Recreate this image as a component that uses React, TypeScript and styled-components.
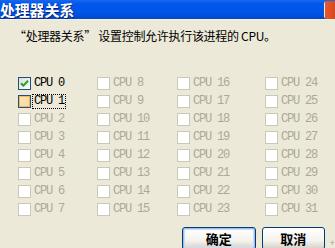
import styled, { createGlobalStyle, css } from "styled-components";

const GlobalStyle = createGlobalStyle`
  body {
    margin: 0;
    background: #ece9d8;
    overflow: hidden;
  }
`;

type BoxState = "checked" | "hover" | "off" | "disabled";

const cpus = Array.from({ length: 32 }, (_, i) => i);

function stateOf(n: number): BoxState {
  if (n === 0) return "checked";
  if (n === 1) return "hover";
  return "disabled";
}

export default function App() {
  return (
    <>
      <GlobalStyle />
      <Window>
        <TitleBar>
          <Title>处理器关系</Title>
          <CloseBox />
        </TitleBar>
        <Body>
          <Desc>“处理器关系” 设置控制允许执行该进程的 CPU。</Desc>
          <CpuGrid>
            {cpus.map((n) => {
              const st = stateOf(n);
              return (
                <CpuItem key={n}>
                  <Box $state={st}>
                    {st === "checked" && (
                      <svg width="9" height="9" viewBox="0 0 9 9">
                        <path
                          d="M1 4.2 L3.4 6.6 L8 1.8"
                          fill="none"
                          stroke="#21a121"
                          strokeWidth="2"
                        />
                      </svg>
                    )}
                  </Box>
                  <Label $disabled={st === "disabled"} $focused={n === 1}>
                    CPU {n}
                  </Label>
                </CpuItem>
              );
            })}
          </CpuGrid>
          <ButtonRow>
            <Button $primary $w={75}>确定</Button>
            <Button $w={64}>取消</Button>
            <Grip>+</Grip>
          </ButtonRow>
        </Body>
      </Window>
    </>
  );
}

const Window = styled.div`
  width: 335px;
  height: 248px;
  display: flex;
  flex-direction: column;
  background: #ece9d8;
`;

const TitleBar = styled.div`
  height: 20px;
  display: flex;
  align-items: flex-start;
  justify-content: space-between;
  background: linear-gradient(#1a68ea 0%, #0058ee 20%, #0054e3 70%, #0148c8 100%);
  border-bottom: 1px solid #f4f2ea;
`;

const Title = styled.div`
  font-family: "Noto Sans CJK SC", sans-serif;
  font-size: 15px;
  font-weight: 700;
  line-height: 19px;
  color: #fff;
  text-shadow: 1px 1px #0a1e6e;
  letter-spacing: -0.2px;
`;

const CloseBox = styled.div`
  width: 11px;
  height: 18px;
  margin-top: 1px;
  background: linear-gradient(90deg, #f4e4dc 0, #f4e4dc 1px, #e35b2e 1px, #d8481e 100%);
  border-radius: 3px 0 0 3px;
`;

const Body = styled.div`
  flex: 1;
  display: flex;
  flex-direction: column;
`;

const Desc = styled.div`
  margin: 8px 0 0 14px;
  font-family: "Noto Sans CJK SC", sans-serif;
  font-size: 12px;
  line-height: 16px;
  letter-spacing: -0.3px;
  color: #000;
  white-space: nowrap;
`;

const CpuGrid = styled.div`
  margin: 30px 0 0 18px;
  display: grid;
  grid-template-columns: 79px 80px 88px 70px;
  grid-template-rows: repeat(8, 18px);
  grid-auto-flow: column;
`;

const CpuItem = styled.div`
  display: flex;
  align-items: center;
  gap: 2px;
`;

const Box = styled.div<{ $state: BoxState }>`
  width: 13px;
  height: 13px;
  box-sizing: border-box;
  display: flex;
  align-items: center;
  justify-content: center;
  ${(p) =>
    p.$state === "disabled"
      ? css`
          border: 1px solid #cac8bb;
          background: #fff;
        `
      : p.$state === "hover"
      ? css`
          border: 1px solid #1c5180;
          background: linear-gradient(135deg, #fbe8c4, #f6d59a);
          box-shadow: inset 0 0 0 1px #f8b84e;
        `
      : css`
          border: 1px solid #1c5180;
          background: linear-gradient(135deg, #dcdcd7, #fff);
        `}
`;

const Label = styled.span<{ $disabled?: boolean; $focused?: boolean }>`
  font-family: "Liberation Mono", monospace;
  font-size: 12px;
  letter-spacing: -1.2px;
  line-height: 13px;
  padding: 0 1px;
  color: ${(p) => (p.$disabled ? "#aca899" : "#000")};
  outline: ${(p) => (p.$focused ? "1px dotted #000" : "none")};
  white-space: nowrap;
`;

const ButtonRow = styled.div`
  margin: 9px 0 0 182px;
  display: flex;
  align-items: flex-start;
  gap: 6px;
`;

const Button = styled.button<{ $primary?: boolean; $w: number }>`
  width: ${(p) => p.$w}px;
  height: 23px;
  padding: 0;
  border: 1px solid #003c74;
  border-radius: 3px;
  background: linear-gradient(#fff 0%, #f4f3ee 60%, #d6d0c5 100%);
  font-family: "Noto Sans CJK SC", sans-serif;
  font-size: 13px;
  font-weight: 700;
  line-height: 20px;
  color: #000;
  box-shadow: ${(p) => (p.$primary ? "inset 0 0 0 1px #a3bcef, inset 0 0 0 2px #cedbf5" : "none")};
`;

const Grip = styled.span`
  margin-top: 12px;
  margin-left: -1px;
  font-family: "Liberation Mono", monospace;
  font-size: 9px;
  color: #a0a0a0;
`;
